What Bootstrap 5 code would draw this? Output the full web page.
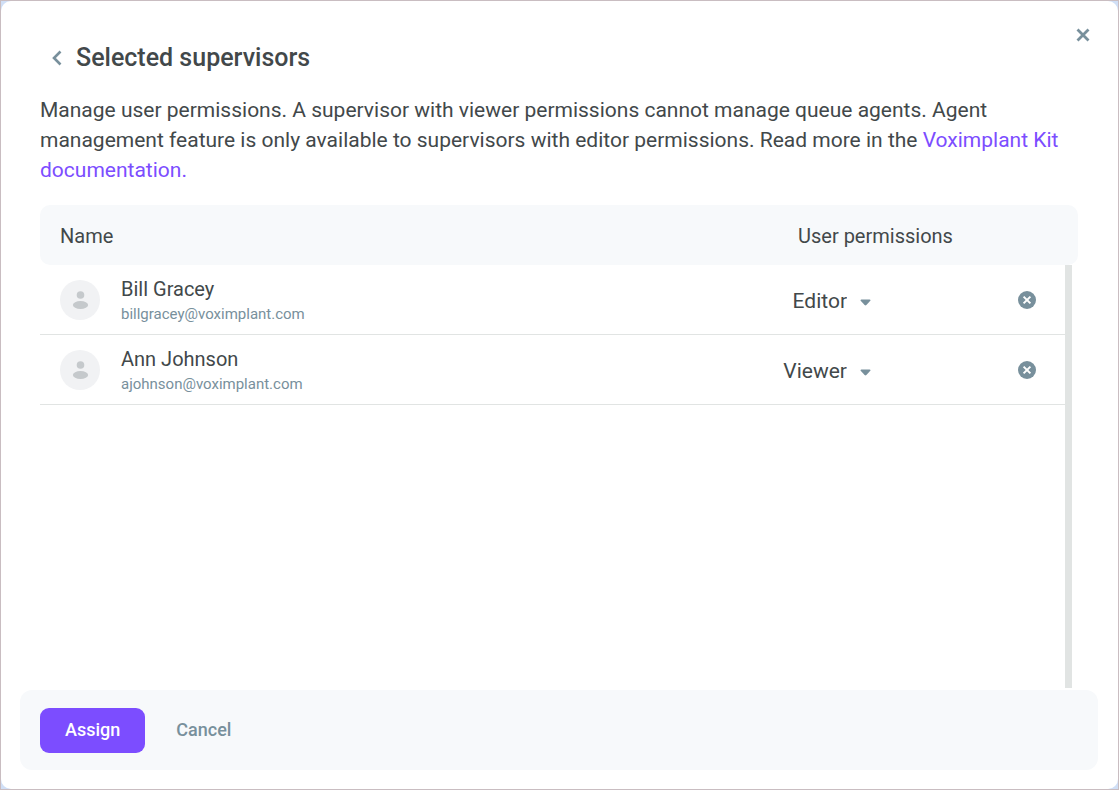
<!DOCTYPE html>
<html lang="en">
<head>
<meta charset="utf-8">
<meta name="viewport" content="width=device-width, initial-scale=1">
<title>Selected supervisors</title>
<link href="https://cdn.jsdelivr.net/npm/bootstrap@5.3.0/dist/css/bootstrap.min.css" rel="stylesheet">
<style>
  :root { --ink: #42484a; --slate: #78909c; --violet: #7c4dff; --soft: #f7f9fb; --line: #e1e4e3; }
  body { font-family: Roboto, "Liberation Sans", sans-serif; font-size: 21px; line-height: 30px; color: var(--ink); background: #d0dff6; border: 1px solid #c9bdc1; }
  .dialog { border-radius: 10px; padding: 20px 20px 19px 19px; }
  .dialog-top { padding: 21px 20px 0; }
  .dialog-title { font-size: 25px; line-height: 32px; font-weight: 500; }
  .icon-btn { color: var(--slate); line-height: 0; }
  .close-btn { top: 19px; right: 20px; padding: 8px; }
  .doc-link { color: var(--violet); }
  .intro { margin: 21px 0 0; }
  .people-wrap { margin: 20px 20px 2px; }
  .people { color: var(--ink); border-collapse: separate; border-spacing: 0; }
  .people th, .people td { padding: 0; }
  .people th { background: var(--soft); height: 60px; padding-top: 2px; font-size: 20px; font-weight: 400; }
  .people th:first-child { border-radius: 10px 0 0 10px; }
  .people th:last-child { border-radius: 0 10px 10px 0; }
  .people td { height: 70px; }
  .people td:not(:last-child) { border-bottom: 1px solid var(--line); }
  .people th:first-child, .people td:first-child { padding-left: 20px; }
  .col-perm { width: 200px; }
  .col-remove { width: 105px; }
  .col-gutter { width: 13px; }
  .people th.perm-head { padding-left: 38px; }
  .people td.perm-cell { padding-top: 2px; }
  .person { gap: 21px; }
  .person-text { padding-top: 3px; }
  .person-name { font-size: 20px; line-height: 25px; }
  .person-mail { font-size: 15px; line-height: 24px; color: var(--slate); }
  .remove-btn { padding: 6px; margin-left: 52px; }
  .perm-select { appearance: none; display: block; width: 111px; border: 0; padding: 0 24px 0 0; font-size: 21px; line-height: 30px; color: var(--ink); text-align-last: right;
    background: url("data:image/svg+xml,%3Csvg xmlns='http://www.w3.org/2000/svg' width='11' height='7'%3E%3Cpath d='M1.3.5h8.4q1.3.2.6 1.2L6.4 6q-.9.8-1.8 0L.7 1.7Q0 .7 1.3.5z' fill='%2378909c'/%3E%3C/svg%3E") no-repeat right 13px; }
  .scroll-track { top: 60px; right: 6px; width: 7px; background: var(--line); }
  .dialog-foot { background: var(--soft); border-radius: 12px; padding: 18px 20px 17px; gap: 6px; }
  .foot-btn { font-size: 18px; line-height: 27px; font-weight: 500; padding: 8px 25px 10px; border-radius: 9px; color: var(--slate); }
  .foot-btn-main, .foot-btn-main:hover { background: var(--violet); color: #fff; }
</style>
</head>
<body class="min-vh-100 d-flex flex-column">
<main class="dialog bg-white position-relative flex-grow-1 d-flex flex-column">
  <button type="button" class="btn border-0 icon-btn close-btn position-absolute" aria-label="Close">
    <svg width="14" height="14" viewBox="0 0 14 14" fill="none" stroke="currentColor" stroke-width="2.8"><path d="M1.500 1.500l11 11M12.500 1.500l-11 11"/></svg>
  </button>
  <header class="dialog-top">
    <div class="d-flex align-items-center">
      <button type="button" class="btn border-0 icon-btn p-2" aria-label="Back">
        <svg width="20" height="16" viewBox="0 0 20 16" fill="none" stroke="currentColor" stroke-width="2.600"><path d="M12.500 1.500L6 8l6.500 6.500"/></svg>
      </button>
      <h1 class="dialog-title mb-0">Selected supervisors</h1>
    </div>
    <p class="intro">Manage user permissions. A supervisor with viewer permissions cannot manage queue agents. Agent management feature is only available to supervisors with editor permissions. Read more in the <a class="doc-link text-decoration-none" href="#">Voximplant Kit documentation.</a></p>
  </header>
  <section class="people-wrap position-relative flex-grow-1">
    <table class="people w-100">
      <colgroup><col><col class="col-perm"><col class="col-remove"><col class="col-gutter"></colgroup>
      <thead>
        <tr><th scope="col">Name</th><th class="perm-head" scope="col">User permissions</th><th></th><th></th></tr>
      </thead>
      <tbody>
        <tr>
          <td>
            <div class="person d-flex align-items-center">
              <svg class="flex-shrink-0" width="40" height="40" viewBox="0 0 40 40"><circle cx="20" cy="20" r="20" fill="#f1f2f4"/><g fill="#c5c9cc"><circle cx="20.500" cy="15" r="3.800"/><ellipse cx="20.500" cy="25" rx="7.600" ry="4"/></g></svg>
              <div class="person-text"><div class="person-name">Bill Gracey</div><div class="person-mail">billgracey@voximplant.com</div></div>
            </div>
          </td>
          <td class="perm-cell"><select class="perm-select" aria-label="Permissions of Bill Gracey"><option selected>Editor</option><option>Viewer</option></select></td>
          <td><button type="button" class="btn border-0 icon-btn remove-btn" aria-label="Remove Bill Gracey"><svg width="18" height="18" viewBox="0 0 18 18"><circle cx="9" cy="9" r="9" fill="currentColor"/><path d="M5.600 5.600l6.800 6.800M12.400 5.600l-6.800 6.800" stroke="#fff" stroke-width="2"/></svg></button></td>
          <td></td>
        </tr>
        <tr>
          <td>
            <div class="person d-flex align-items-center">
              <svg class="flex-shrink-0" width="40" height="40" viewBox="0 0 40 40"><circle cx="20" cy="20" r="20" fill="#f1f2f4"/><g fill="#c5c9cc"><circle cx="20.500" cy="15" r="3.800"/><ellipse cx="20.500" cy="25" rx="7.600" ry="4"/></g></svg>
              <div class="person-text"><div class="person-name">Ann Johnson</div><div class="person-mail">ajohnson@voximplant.com</div></div>
            </div>
          </td>
          <td class="perm-cell"><select class="perm-select" aria-label="Permissions of Ann Johnson"><option>Editor</option><option selected>Viewer</option></select></td>
          <td><button type="button" class="btn border-0 icon-btn remove-btn" aria-label="Remove Ann Johnson"><svg width="18" height="18" viewBox="0 0 18 18"><circle cx="9" cy="9" r="9" fill="currentColor"/><path d="M5.600 5.600l6.800 6.800M12.400 5.600l-6.800 6.800" stroke="#fff" stroke-width="2"/></svg></button></td>
          <td></td>
        </tr>
      </tbody>
    </table>
    <div class="scroll-track position-absolute bottom-0"></div>
  </section>
  <footer class="dialog-foot d-flex">
    <button type="button" class="btn border-0 foot-btn foot-btn-main">Assign</button>
    <button type="button" class="btn border-0 foot-btn">Cancel</button>
  </footer>
</main>
<script src="https://cdn.jsdelivr.net/npm/bootstrap@5.3.0/dist/js/bootstrap.bundle.min.js"></script>
</body>
</html>
